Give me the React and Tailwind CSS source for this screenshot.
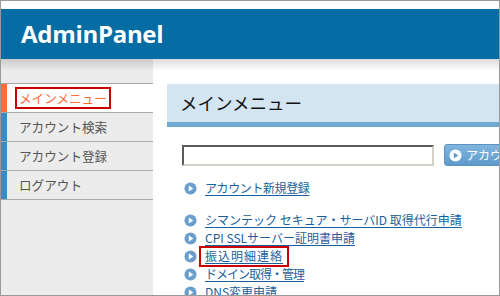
import React from "react";

const jp = { fontFamily: '"Noto Sans CJK JP", "Noto Sans", sans-serif' };

function PlayIcon({ size = 13, bg = "#6a9ecb", fg = "#ffffff" }) {
  return (
    <svg width={size} height={size} viewBox="0 0 14 14" className="shrink-0">
      <circle cx="7" cy="7" r="6.5" fill={bg} />
      <path d="M5.2 3.8 L10 7 L5.2 10.2 Z" fill={fg} />
    </svg>
  );
}

function SideItem({ label, active }) {
  return (
    <div
      className={`flex h-[29px] border-b border-[#a9a9a9] ${active ? "bg-white" : "bg-[#ececec]"}`}
    >
      <div className={`w-[6px] h-full ${active ? "bg-[#ff6a3a]" : "bg-[#3a8bc4]"}`} />
      <div className="flex items-center pl-[8px]">
        {active ? (
          <span className="border-2 border-[#cc0000] px-[2px] h-[22px] flex items-center leading-none text-[12.6px] text-[#ff6a3a]" style={jp}>
            {label}
          </span>
        ) : (
          <span className="px-[4px] text-[12.6px] text-[#555555] leading-none" style={jp}>
            {label}
          </span>
        )}
      </div>
    </div>
  );
}

function LinkRow({ label, boxed, track = "" }) {
  return (
    <div className="flex items-center h-[18px] pl-[2px]">
      <PlayIcon />
      <div className="ml-[8px] flex items-center">
        {boxed ? (
          <span className="border-2 border-[#cc0000] px-[4px] h-[21px] -ml-[6px] flex items-center">
            <a className={`text-[12px] leading-none text-[#1a5f9c] underline underline-offset-2 whitespace-nowrap ${track}`} style={jp}>{label}</a>
          </span>
        ) : (
          <a className={`text-[12px] leading-none text-[#1a5f9c] underline underline-offset-2 whitespace-nowrap ${track}`} style={jp}>{label}</a>
        )}
      </div>
    </div>
  );
}

export default function App() {
  return (
    <div className="w-[500px] h-[296px] border border-[#9a9a9a] overflow-hidden bg-white flex flex-col">
      <div className="h-[8px] shrink-0 bg-white" />
      <div className="h-[50px] shrink-0 bg-[#066ca4] flex items-center pl-[20px]">
        <span className="text-white text-[24px] font-bold tracking-[-0.3px]" style={{ fontFamily: '"Open Sans", sans-serif' }}>
          AdminPanel
        </span>
      </div>
      <div className="flex flex-1 relative">
        <div className="absolute top-0 left-0 right-0 h-[12px] bg-linear-to-b from-[rgba(0,0,0,0.14)] to-transparent pointer-events-none" />
        <div className="w-[152px] shrink-0 bg-[#ececec]">
          <div className="h-[25px] border-b border-[#a9a9a9]" />
          <SideItem label="メインメニュー" active />
          <SideItem label="アカウント検索" />
          <SideItem label="アカウント登録" />
          <SideItem label="ログアウト" />
        </div>
        <div className="flex-1 pl-[14px] pt-[25px] min-w-0 overflow-hidden">
          <div className="h-[43px] bg-[#d3e5f1] border-b-[5px] border-[#72a9d0] flex items-center pl-[13px] w-full">
            <span className="text-[17.5px] text-[#111111] leading-none" style={jp}>メインメニュー</span>
          </div>
          <div className="pl-[15px] pt-[17px]">
            <div className="flex items-center">
              <div className="w-[252px] shrink-0 h-[21px] border-2 border-t-[#5a5a5a] border-l-[#5a5a5a] border-b-[#d4d0c8] border-r-[#d4d0c8] bg-white" />
              <div className="ml-[10px] shrink-0 w-[130px] h-[22px] rounded-[3px] bg-linear-to-b from-[#80b5de] to-[#5f9acb] border border-[#5a92c2] flex items-center pl-[4px] gap-[4px]">
                <PlayIcon size={13} bg="#ffffff" fg="#5f9acb" />
                <span className="text-white text-[12px] leading-none whitespace-nowrap" style={jp}>アカウント検索</span>
              </div>
            </div>
            <div className="mt-[13px]">
              <LinkRow label="アカウント新規登録" track="tracking-[-0.4px]" />
            </div>
            <div className="mt-[14px]">
              <LinkRow label="シマンテック セキュア・サーバID 取得代行申請" />
              <LinkRow label="CPI SSLサーバー証明書申請" />
              <LinkRow label="振込明細連絡" boxed track="tracking-[1px]" />
              <LinkRow label="ドメイン取得・管理" track="tracking-[-1px]" />
              <LinkRow label="DNS変更申請" />
            </div>
          </div>
        </div>
      </div>
    </div>
  );
}
